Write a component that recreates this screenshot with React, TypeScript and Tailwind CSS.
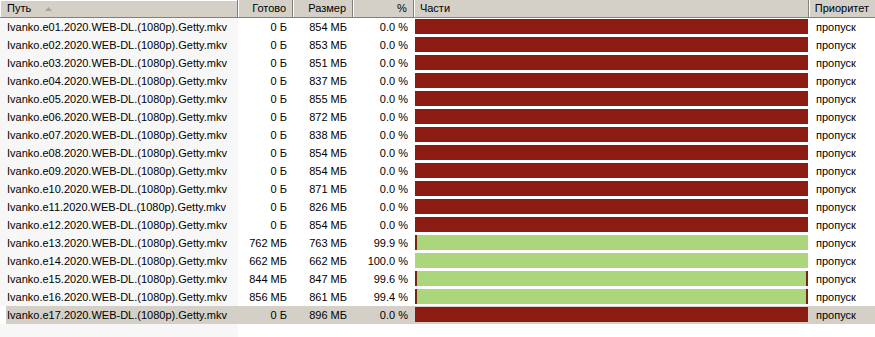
import React from 'react';

type Row = { ep: string; done: string; size: string; pct: string; kind: 'red' | 'green'; left?: boolean; right?: boolean };

const rows: Row[] = [
  { ep: '01', done: '0 Б', size: '854 МБ', pct: '0.0 %', kind: 'red' },
  { ep: '02', done: '0 Б', size: '853 МБ', pct: '0.0 %', kind: 'red' },
  { ep: '03', done: '0 Б', size: '851 МБ', pct: '0.0 %', kind: 'red' },
  { ep: '04', done: '0 Б', size: '837 МБ', pct: '0.0 %', kind: 'red' },
  { ep: '05', done: '0 Б', size: '855 МБ', pct: '0.0 %', kind: 'red' },
  { ep: '06', done: '0 Б', size: '872 МБ', pct: '0.0 %', kind: 'red' },
  { ep: '07', done: '0 Б', size: '838 МБ', pct: '0.0 %', kind: 'red' },
  { ep: '08', done: '0 Б', size: '854 МБ', pct: '0.0 %', kind: 'red' },
  { ep: '09', done: '0 Б', size: '854 МБ', pct: '0.0 %', kind: 'red' },
  { ep: '10', done: '0 Б', size: '871 МБ', pct: '0.0 %', kind: 'red' },
  { ep: '11', done: '0 Б', size: '826 МБ', pct: '0.0 %', kind: 'red' },
  { ep: '12', done: '0 Б', size: '854 МБ', pct: '0.0 %', kind: 'red' },
  { ep: '13', done: '762 МБ', size: '763 МБ', pct: '99.9 %', kind: 'green', left: true },
  { ep: '14', done: '662 МБ', size: '662 МБ', pct: '100.0 %', kind: 'green' },
  { ep: '15', done: '844 МБ', size: '847 МБ', pct: '99.6 %', kind: 'green', left: true, right: true },
  { ep: '16', done: '856 МБ', size: '861 МБ', pct: '99.4 %', kind: 'green', left: true, right: true },
  { ep: '17', done: '0 Б', size: '896 МБ', pct: '0.0 %', kind: 'red' },
];

const HeaderCell = ({ w, children, right }: { w: string; children: React.ReactNode; right?: boolean }) => (
  <div className={`${w} h-full flex items-center border-l border-l-[#808080] shadow-[inset_1px_0_0_#ffffff] px-[6px] ${right ? 'justify-end' : ''}`}>
    {children}
  </div>
);

export default function App() {
  return (
    <div className="w-[875px] h-[337px] bg-white overflow-hidden text-[11px] text-black leading-none" style={{ fontFamily: 'Tahoma, "Liberation Sans", Arial, sans-serif' }}>
      {/* Header */}
      <div className="flex h-[18px] bg-[#d4d0c8] border-b border-b-[#808080]">
        <div className="w-[238px] h-full flex items-center pl-[7px] shadow-[inset_1px_1px_0_#ffffff]">
          Путь
          <svg className="ml-[14px]" width="7" height="4" viewBox="0 0 7 4">
            <path d="M0 4 L3.5 0 L7 4 Z" fill="#a8a49c" />
          </svg>
        </div>
        <HeaderCell w="w-[55px]" right>Готово</HeaderCell>
        <HeaderCell w="w-[60px]" right>Размер</HeaderCell>
        <HeaderCell w="w-[61px]" right>%</HeaderCell>
        <HeaderCell w="w-[396px]">Части</HeaderCell>
        <HeaderCell w="flex-1">Приоритет</HeaderCell>
      </div>

      {/* Rows */}
      <div className="flex flex-col">
        {rows.map((r, i) => {
          const sel = i === rows.length - 1;
          return (
            <div key={r.ep} className={`flex h-[18px] items-center ${sel ? 'bg-[#d4d0c8]' : ''}`}>
              <div className={`w-[238px] h-full flex items-center pl-[7px] ${sel ? 'bg-[#d4d0c8] shadow-[inset_6px_0_0_#ffffff]' : 'bg-[#f7f7f7]'}`}>
                Ivanko.e{r.ep}.2020.WEB-DL.(1080p).Getty.mkv
              </div>
              <div className="w-[55px] text-right pr-[6px]">{r.done}</div>
              <div className="w-[60px] text-right pr-[6px]">{r.size}</div>
              <div className="w-[61px] text-right pr-[6px]">{r.pct}</div>
              <div className="w-[396px] h-full flex items-start pl-[1px] pr-[2px] pt-[1px]">
                {r.kind === 'red' ? (
                  <div className="w-full h-[15px] bg-[#8c1b11]" />
                ) : (
                  <div className="w-full h-[15px] bg-[#acd67c] flex justify-between">
                    <div className={`w-[2px] h-full ${r.left ? 'bg-[#7a2412]' : ''}`} />
                    <div className={`w-[2px] h-full ${r.right ? 'bg-[#7a2412]' : ''}`} />
                  </div>
                )}
              </div>
              <div className="w-[65px] pl-[6px]">пропуск</div>
            </div>
          );
        })}
        <div className="w-[238px] h-[20px] bg-[#f7f7f7]" />
      </div>
    </div>
  );
}
